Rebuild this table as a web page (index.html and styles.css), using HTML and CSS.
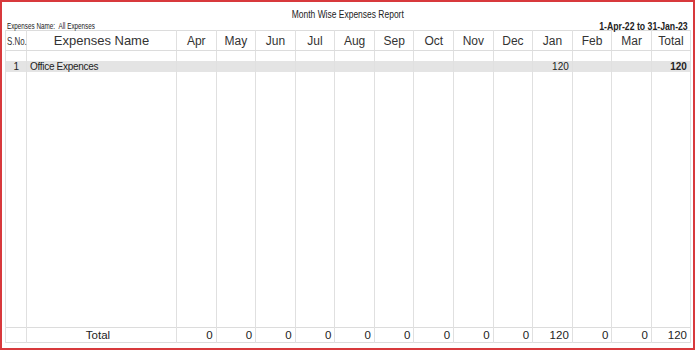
FILE: index.html
```html
<!DOCTYPE html>
<html>
<head>
<meta charset="utf-8">
<link rel="stylesheet" href="styles.css">
</head>
<body>
<div class="frame">
  <div class="title"><span class="narrow">Month Wise Expenses Report</span></div>
  <div class="meta">
    <span class="filter">Expenses Name:&nbsp;&nbsp;All Expenses</span>
    <span class="period">1-Apr-22 to 31-Jan-23</span>
  </div>
  <table class="report">
    <colgroup>
      <col class="c-sno"><col class="c-name">
      <col class="c-m"><col class="c-m"><col class="c-m"><col class="c-m"><col class="c-m"><col class="c-m">
      <col class="c-m"><col class="c-m"><col class="c-m"><col class="c-m"><col class="c-m"><col class="c-m">
      <col class="c-tot">
    </colgroup>
    <thead>
      <tr class="head">
        <th class="sno"><span class="sno-t">S.No.</span></th><th class="name">Expenses Name</th>
        <th>Apr</th><th>May</th><th>Jun</th><th>Jul</th><th>Aug</th><th>Sep</th>
        <th>Oct</th><th>Nov</th><th>Dec</th><th>Jan</th><th>Feb</th><th>Mar</th><th>Total</th>
      </tr>
    </thead>
    <tbody>
      <tr class="spacer"><td></td><td></td><td></td><td></td><td></td><td></td><td></td><td></td><td></td><td></td><td></td><td></td><td></td><td></td><td></td></tr>
      <tr class="row">
        <td class="num-c">1</td><td class="txt">Office Expences</td>
        <td></td><td></td><td></td><td></td><td></td><td></td><td></td><td></td><td></td><td>120</td><td></td><td></td><td class="bold">120</td>
      </tr>
      <tr class="filler"><td></td><td></td><td></td><td></td><td></td><td></td><td></td><td></td><td></td><td></td><td></td><td></td><td></td><td></td><td></td></tr>
    </tbody>
    <tfoot>
      <tr class="foot">
        <td></td><td class="ftitle">Total</td>
        <td>0</td><td>0</td><td>0</td><td>0</td><td>0</td><td>0</td><td>0</td><td>0</td><td>0</td><td>120</td><td>0</td><td>0</td><td>120</td>
      </tr>
    </tfoot>
  </table>
</div>
</body>
</html>
```
FILE: styles.css
```css
html, body {
  margin: 0;
  padding: 0;
  background: #ffffff;
}
body {
  font-family: "Liberation Sans", Arial, sans-serif;
  color: #222;
}
.frame {
  box-sizing: border-box;
  width: 695px;
  height: 350px;
  border: 2px solid #d8393c;
  padding: 0 3px 0 3px;
}
.title {
  font-size: 11px;
  text-align: center;
  height: 18px;
  line-height: 25px;
  color: #222;
}
.narrow {
  display: inline-block;
  transform: scaleX(0.77);
}
.meta {
  display: flex;
  justify-content: space-between;
  align-items: flex-end;
  height: 10px;
  padding: 0 2px 0 2px;
}
.filter {
  display: inline-block;
  font-size: 9px;
  line-height: 11px;
  transform: scaleX(0.70);
  transform-origin: left center;
  white-space: nowrap;
  position: relative;
  top: 2px;
}
.period {
  display: inline-block;
  font-size: 10px;
  font-weight: bold;
  line-height: 11px;
  color: #222;
  transform: scaleX(0.87);
  transform-origin: right center;
  white-space: nowrap;
  position: relative;
  top: 2px;
}
.report {
  width: 685px;
  table-layout: fixed;
  border-collapse: collapse;
  border: 1px solid #dcdcdc;
}
.c-sno { width: 21px; }
.c-name { width: 150px; }
.c-m { width: 39.58px; }
.c-tot { width: 39px; }
.report th, .report td {
  border-left: 1px solid #e0e0e0;
  border-right: 1px solid #e0e0e0;
  padding: 0 3px;
  overflow: hidden;
  white-space: nowrap;
}
.head th {
  height: 19px;
  font-weight: normal;
  font-size: 12px;
  color: #333;
  text-align: center;
  border-bottom: 1px solid #dcdcdc;
  padding: 0;
}
.head th.sno {
  text-align: left;
  padding-left: 1px;
  overflow: visible;
}
.sno-t {
  display: inline-block;
  font-size: 11px;
  transform: scaleX(0.72);
  transform-origin: left center;
}
.head th.name {
  font-size: 13px;
}
.spacer td {
  height: 10px;
}
.row td {
  height: 11px;
  background: #e4e4e4;
  font-size: 10px;
  line-height: 11px;
  text-align: right;
  color: #222;
}
.row td.num-c {
  text-align: right;
  padding-right: 7px;
}
.row td.txt {
  text-align: left;
  font-size: 10px;
  letter-spacing: -0.3px;
  padding-left: 3px;
}
.row td.bold {
  font-weight: bold;
}
.filler td {
  height: 255px;
}
.foot td {
  height: 14px;
  border-top: 1px solid #dcdcdc;
  font-size: 11.5px;
  line-height: 14px;
  text-align: right;
  color: #222;
}
.foot td.ftitle {
  text-align: center;
  padding-right: 10px;
}
```
